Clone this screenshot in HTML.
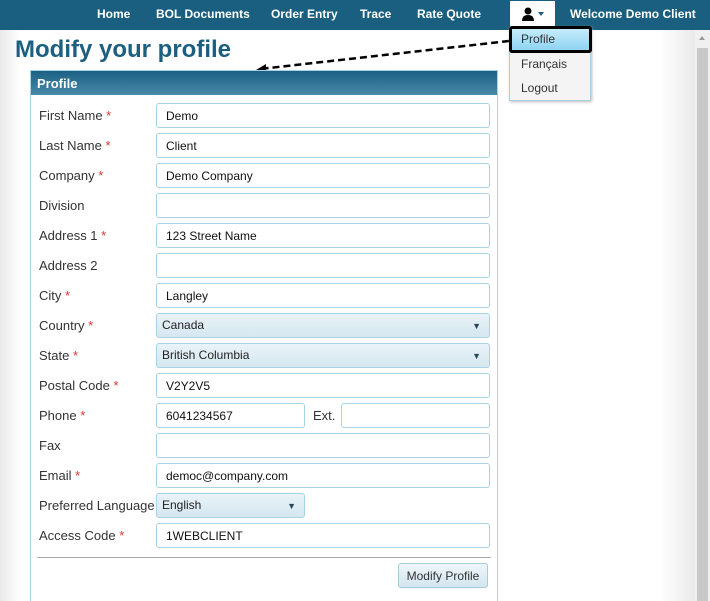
<!DOCTYPE html>
<html><head><style>
*{box-sizing:border-box;margin:0;padding:0}
body{width:710px;height:601px;overflow:hidden;background:#fff;font-family:"Liberation Sans",Arial,sans-serif;position:relative}
.nav{position:absolute;left:0;top:0;width:710px;height:30px;background:#1b5f80}
.nav span{position:absolute;top:7px;color:#fff;font-weight:bold;font-size:12px}
.shade{position:absolute;left:0;top:30px;width:20px;height:571px;background:linear-gradient(90deg,#e8e8e8,#fff)}
.shade2{position:absolute;left:660px;top:30px;width:35px;height:571px;background:linear-gradient(90deg,#fff,#eaeaea)}
.sb{position:absolute;left:695px;top:30px;width:15px;height:571px;background:#f0f0f0}
.sb .th{position:absolute;left:2px;top:18px;width:11px;height:553px;background:#c8c8c8}
h1{position:absolute;left:15px;top:36px;font-size:24px;color:#1c5f80;font-weight:bold}
.panel{position:absolute;left:30px;top:70px;width:468px;height:531px;border:1px solid #a9d3e4;border-bottom:none}
.ph{height:24px;background:linear-gradient(#1b6084,#4a8aa7);color:#fff;font-weight:bold;font-size:13px;padding:5px 6px}
.lb{position:absolute;left:39px;font-size:13px;color:#333}
.lb i{color:#d33;font-style:normal}
.in{position:absolute;left:156px;width:334px;height:25px;border:1px solid #a9d3e4;border-radius:3px;font-size:12px;padding:5px 9px;color:#111}
.sel{background:linear-gradient(#e9f3f8,#d5e7f0);padding:4px 5px;color:#222}
.sel:after{content:"▼";position:absolute;right:8px;top:7px;font-size:9px;color:#2a4a5a}
.btn{position:absolute;left:398px;top:563px;width:90px;height:25px;border:1px solid #a9cbd9;border-radius:3px;background:linear-gradient(#eef6fa,#d3e6ef);font-size:12px;color:#333;text-align:center;padding-top:5px}
.dd{position:absolute;left:509px;top:27px;width:82px;height:74px;background:#f4f4f4;border:1px solid #aacfe0;box-shadow:1px 1px 3px #bbb}
.dd div{position:absolute;left:11px;font-size:12px;color:#333}
.act{position:absolute;left:509px;top:26px;width:83px;height:27px;border:3px solid #000;border-radius:3px;background:linear-gradient(#c6ecfb,#8ed3f1);font-size:12px;padding:3px 9px;color:#333}
</style></head><body>
<div class="nav">
<span style="left:97px">Home</span><span style="left:156px">BOL Documents</span><span style="left:271px">Order Entry</span><span style="left:360px">Trace</span><span style="left:417px">Rate Quote</span>
<div style="position:absolute;left:510px;top:1px;width:45px;height:29px;background:#fff">
<svg width="45" height="29"><circle cx="18" cy="10" r="3.5" fill="#000"/><path d="M12 20 Q12 14 18 14 Q24 14 24 20Z" fill="#000"/><path d="M28 11h6l-3 4z" fill="#1b5f80"/></svg></div>
<span style="left:570px">Welcome Demo Client</span>
</div>
<div class="shade"></div><div class="shade2"></div>
<div class="sb"><div class="th"></div><div style="position:absolute;left:4px;top:6px;border:3.5px solid transparent;border-bottom:4px solid #999;border-top:none"></div></div>
<h1>Modify your profile</h1>
<svg style="position:absolute;left:250px;top:38px" width="265" height="36"><line x1="259" y1="3" x2="10" y2="31" stroke="#000" stroke-width="2.5" stroke-dasharray="7,4"/><path d="M6 32 L16 26 L16 34Z" fill="#000"/></svg>
<div class="panel"><div class="ph">Profile</div>
<div style="position:absolute;left:6px;top:486px;width:454px;height:1px;background:#aaa"></div></div>
<div class="lb" style="top:108px">First Name <i>*</i></div><div class="in" style="top:103px">Demo</div>
<div class="lb" style="top:138px">Last Name <i>*</i></div><div class="in" style="top:133px">Client</div>
<div class="lb" style="top:168px">Company <i>*</i></div><div class="in" style="top:163px">Demo Company</div>
<div class="lb" style="top:198px">Division</div><div class="in" style="top:193px"></div>
<div class="lb" style="top:228px">Address 1 <i>*</i></div><div class="in" style="top:223px">123 Street Name</div>
<div class="lb" style="top:258px">Address 2</div><div class="in" style="top:253px"></div>
<div class="lb" style="top:288px">City <i>*</i></div><div class="in" style="top:283px">Langley</div>
<div class="lb" style="top:318px">Country <i>*</i></div><div class="in sel" style="top:313px">Canada</div>
<div class="lb" style="top:348px">State <i>*</i></div><div class="in sel" style="top:343px">British Columbia</div>
<div class="lb" style="top:378px">Postal Code <i>*</i></div><div class="in" style="top:373px">V2Y2V5</div>
<div class="lb" style="top:408px">Phone <i>*</i></div><div class="in" style="top:403px;width:149px">6041234567</div>
<div class="lb" style="top:408px;left:313px">Ext.</div><div class="in" style="top:403px;left:341px;width:149px"></div>
<div class="lb" style="top:438px">Fax</div><div class="in" style="top:433px"></div>
<div class="lb" style="top:468px">Email <i>*</i></div><div class="in" style="top:463px">democ@company.com</div>
<div class="lb" style="top:498px">Preferred Language</div><div class="in sel" style="top:493px;width:149px">English</div>
<div class="lb" style="top:528px">Access Code <i>*</i></div><div class="in" style="top:523px">1WEBCLIENT</div>
<div class="btn">Modify Profile</div>
<div class="dd"><div style="top:29px">Français</div><div style="top:53px">Logout</div></div>
<div class="act">Profile</div>
</body></html>
